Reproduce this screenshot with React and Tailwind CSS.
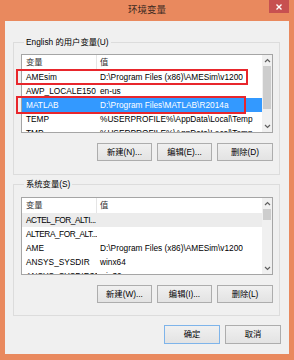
import React from 'react';

const FONT = { fontFamily: '"Liberation Sans", "Noto Sans CJK SC", sans-serif' };

const userVars = [
    { name: 'AMEsim', value: 'D:\\Program Files (x86)\\AMESim\\v1200' },
    { name: 'AWP_LOCALE150', value: 'en-us' },
    { name: 'MATLAB', value: 'D:\\Program Files\\MATLAB\\R2014a', selected: true },
    { name: 'TEMP', value: '%USERPROFILE%\\AppData\\Local\\Temp' },
    { name: 'TMP', value: '%USERPROFILE%\\AppData\\Local\\Temp' },
];

const systemVars = [
    { name: 'ACTEL_FOR_ALTI...', value: '', muted: true, tight: true },
    { name: 'ALTERA_FOR_ALT...', value: '', tight: true },
    { name: 'AME', value: 'D:\\Program Files (x86)\\AMESim\\v1200' },
    { name: 'ANSYS_SYSDIR', value: 'winx64' },
    { name: 'ANSYS_SYSDIR32', value: 'win32' },
];

const Chevron = ({ up }) => (
    <svg width="7" height="5" viewBox="0 0 7 5" fill="none" stroke="#606060" strokeWidth="1.2">
        {up ? <path d="M1 4L3.5 1.5L6 4" /> : <path d="M1 1L3.5 3.5L6 1" />}
    </svg>
);

const ListBox = ({ rows, heightClass, thumbClass }) => (
    <div className={`flex border border-[#a5a5a5] bg-white overflow-hidden ${heightClass}`}>
        <div className="flex-1 flex flex-col overflow-hidden">
            <div className="flex h-[15px] shrink-0 items-center text-[#333]">
                <div className="w-[75px] pl-[4px] h-full flex items-center border-r border-[#e5e5e5]">变量</div>
                <div className="pl-[3px]">值</div>
            </div>
            {rows.map(r => (
                <div
                    key={r.name}
                    className={`flex h-[14px] shrink-0 items-center whitespace-nowrap ${r.selected ? 'bg-[#3399ff] text-white' : r.muted ? 'bg-[#ececec] text-black' : 'text-black'}`}
                >
                    <div className={`w-[75px] pl-[4px] overflow-hidden ${r.tight ? 'tracking-[-0.45px]' : ''}`}>{r.name}</div>
                    <div className="pl-[3px] overflow-hidden">{r.value}</div>
                </div>
            ))}
        </div>
        <div className="w-[10px] flex flex-col bg-[#f0f0f0]">
            <div className="h-[11px] flex items-center justify-center"><Chevron up /></div>
            <div className="flex-1 px-[1px]">
                <div className={`bg-[#cdcdcd] ${thumbClass}`}></div>
            </div>
            <div className="h-[11px] flex items-center justify-center"><Chevron /></div>
        </div>
    </div>
);

const Btn = ({ children, primary, w = 'w-[55px]', h = 'h-[18px]' }) => (
    <div className={`${w} ${h} flex items-center justify-center border ${primary ? 'border-[#7eb4ea]' : 'border-[#adadad]'} bg-linear-to-b from-[#f0f0f0] to-[#e3e3e3] text-black`}>
        {children}
    </div>
);

const Group = ({ title, className, children }) => (
    <fieldset className={`border border-[#dcdcdc] ml-[8px] mr-[9px] pl-[7px] pr-[6px] ${className}`}>
        <legend className="ml-[3px] px-[2px] leading-[16px] text-black">{title}</legend>
        {children}
    </fieldset>
);

export default function App() {
    return (
        <div className="w-[294px] h-[360px] bg-[#e9895e] flex flex-col relative text-[8.3px]" style={FONT}>
            <div className="h-[21px] relative flex items-center justify-center">
                <span className="text-[9.5px] text-[#3b2a22]">环境变量</span>
                <div className="absolute right-[5px] top-0 w-[20px] h-[13px] bg-[#c75050] flex items-center justify-center">
                    <svg width="6" height="6" viewBox="0 0 6 6" stroke="white" strokeWidth="1.4">
                        <path d="M0.5 0.5L5.5 5.5M5.5 0.5L0.5 5.5" />
                    </svg>
                </div>
            </div>

            <div className="mx-[5px] h-[333px] bg-[#f0f0f0] flex flex-col">
                <Group title="English 的用户变量(U)" className="mt-[13px] pb-[13px]">
                    <div className="mt-[4px]">
                        <ListBox rows={userVars} heightClass="h-[79px]" thumbClass="h-[43px]" />
                    </div>
                    <div className="mt-[10px] flex justify-end gap-[5px]">
                        <Btn>新建(N)...</Btn>
                        <Btn>编辑(E)...</Btn>
                        <Btn w="w-[56px]">删除(D)</Btn>
                    </div>
                </Group>

                <Group title="系统变量(S)" className="mt-[1px] pb-[12px]">
                    <div className="mt-[5px]">
                        <ListBox rows={systemVars} heightClass="h-[78px]" thumbClass="h-[11px]" />
                    </div>
                    <div className="mt-[10px] flex justify-end gap-[5px]">
                        <Btn>新建(W)...</Btn>
                        <Btn>编辑(I)...</Btn>
                        <Btn w="w-[56px]">删除(L)</Btn>
                    </div>
                </Group>

                <div className="mt-[9px] mr-[8px] flex justify-end gap-[5px]">
                    <Btn primary w="w-[56px]" h="h-[19px]">确定</Btn>
                    <Btn w="w-[56px]" h="h-[19px]">取消</Btn>
                </div>
            </div>

            <div className="absolute left-[16px] top-[69px] w-[232px] h-[16px] border-2 border-[#e8262c]"></div>
            <div className="absolute left-[16px] top-[96px] w-[230px] h-[18px] border-2 border-[#e8262c]"></div>
        </div>
    );
}
